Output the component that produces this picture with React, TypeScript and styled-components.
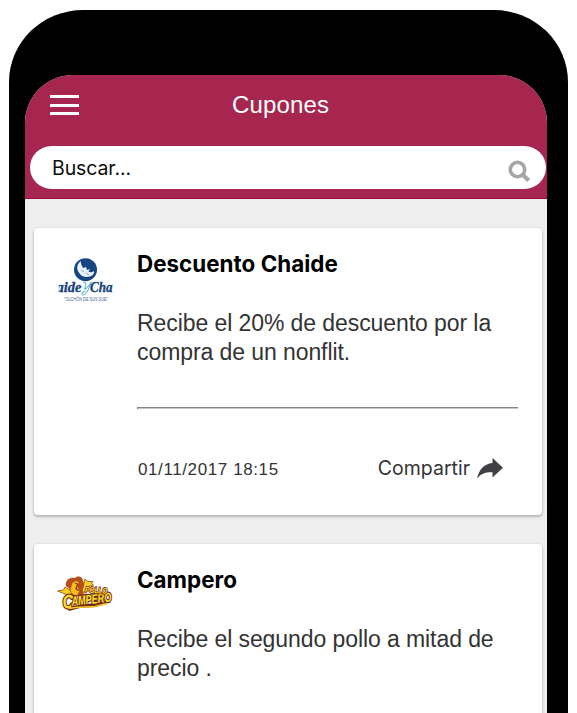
import React from 'react';
import styled, { createGlobalStyle } from 'styled-components';

const GlobalStyle = createGlobalStyle`
  * { box-sizing: border-box; }
  body { margin: 0; background: #fff; overflow: hidden; }
`;

const ui = `Inter, 'Liberation Sans', sans-serif`;
const body = `'Liberation Sans', Arial, sans-serif`;

const Stage = styled.div`
  width: 577px;
  height: 713px;
  padding: 10px 9px 0;
  overflow: hidden;
`;

const Phone = styled.div`
  width: 559px;
  height: 703px;
  padding: 65px 21px 0 16px;
  background: #000;
  border-radius: 74px 74px 0 0 / 72px 72px 0 0;
`;

const Screen = styled.main`
  height: 638px;
  background: #efefef;
  border-radius: 48px 48px 0 0;
  overflow: hidden;
`;

const Header = styled.header`
  height: 124px;
  background: #a6264f;
  border-bottom: 1px solid #9c0a3c;
`;

const TitleBar = styled.div`
  display: grid;
  grid-template-columns: 29px 1fr 40px;
  align-items: center;
  height: 71px;
  padding: 0 25px 11px;
`;

const MenuButton = styled.button`
  display: flex;
  flex-direction: column;
  gap: 5.5px;
  padding: 0;
  border: 0;
  background: none;
`;

const MenuBar = styled.span`
  width: 29px;
  height: 3px;
  background: #fff;
`;

const ScreenTitle = styled.h1`
  margin: 0;
  color: #fff;
  font: 400 24px/30px 'Liberation Sans', sans-serif;
  letter-spacing: 0.15px;
  text-align: center;
`;

const SearchBox = styled.label`
  display: flex;
  align-items: center;
  justify-content: space-between;
  height: 43px;
  margin: 0 1px 0 5px;
  padding: 0 15px 0 22px;
  background: #fff;
  border-radius: 22px;
`;

const SearchText = styled.span`
  color: #0c0c0c;
  font: 400 19.5px/24px ${ui};
  letter-spacing: -0.1px;
`;

const SearchIcon = styled.svg`
  width: 23px;
  height: 23px;
  margin-top: 7px;
`;

const CouponList = styled.section`
  display: flex;
  flex-direction: column;
  gap: 29px;
  padding: 29px 5px 0 9px;
`;

const Card = styled.article`
  display: grid;
  grid-template-columns: 60px 1fr;
  column-gap: 22px;
  height: 287px;
  padding: 23px 24px 0 21px;
  background: #fff;
  border-radius: 4px;
  box-shadow: 0 2px 3px rgba(0, 0, 0, 0.23), 0 0 3px rgba(0, 0, 0, 0.1);
`;

const Logo = styled.svg`
  display: block;
  width: 60px;
  height: 60px;
  overflow: visible;
`;

const CardTitle = styled.h2`
  margin: -1px 0 0;
  color: #000;
  font: 700 22.4px/28px ${ui};
  letter-spacing: 0.02px;
  white-space: nowrap;
`;

const Description = styled.p`
  margin: 31px 0 0;
  height: 57px;
  color: #333;
  font: 400 23px/28.7px ${body};
  letter-spacing: -0.08px;
  white-space: nowrap;
`;

const DescriptionLine = styled.span`
  display: block;
`;

const Rule = styled.hr`
  height: 2px;
  margin: 41px 0 0;
  border: 0;
  border-top: 1px solid #858585;
  border-left: 1px solid #858585;
  background: #c8c8c8;
`;

const CardFooter = styled.footer`
  display: flex;
  align-items: center;
  justify-content: space-between;
  height: 30px;
  margin-top: 44px;
  padding: 0 15px 0 1px;
`;

const Time = styled.time`
  color: #333;
  padding-top: 3px;
  font: 400 17px/20px ${body};
  letter-spacing: 0.6px;
`;

const Share = styled.button`
  display: flex;
  align-items: center;
  gap: 7px;
  padding: 0;
  border: 0;
  background: none;
  color: #333;
  font: 400 19.5px/24px ${ui};
`;

const ShareIcon = styled.svg`
  width: 26px;
  height: 21px;
  margin-top: 1px;
`;

function ChaideLogo() {
  return (
    <Logo viewBox="0 0 60 60" role="img" aria-label="Chaide y Chaide">
      <circle cx="30.500" cy="18.700" r="11.500" fill="#174482" />
      <path d="M25.500 10c-3 3-4.500 7-2 11 2.500 4.500 7.500 6.500 12.500 4 2.500-1.200 3.500-3 3-5-2 1.500-4 1.500-5.500.5l1.500-2.500-3 1-1-3-3 1-1.500-3z" fill="#e9f1fa" />
      <path d="M26 19l3 2M31 22l3 2" fill="none" stroke="#7396c6" strokeWidth=".8" />
      <text x="1.500" y="41" textLength="25" lengthAdjust="spacingAndGlyphs" fontFamily="Liberation Serif, serif" fontSize="14.500" fontStyle="italic" fontWeight="700" fill="#174078" stroke="#174078" strokeWidth=".3">aide</text>
      <path d="M0 27h3.800v16H0z" fill="#fff" />
      <path d="M28 32c4-2 3 3 1.500 6 3 0 5-5 7-7-2 5-4 12-8 13-3 0-1-3 2-4" fill="none" stroke="#62b5df" strokeWidth="1.100" />
      <text x="35" y="41" textLength="22.500" lengthAdjust="spacingAndGlyphs" fontFamily="Liberation Serif, serif" fontSize="14.500" fontStyle="italic" fontWeight="700" fill="#174078" stroke="#174078" strokeWidth=".3">Cha</text>
      <text x="9" y="49.500" textLength="44" lengthAdjust="spacingAndGlyphs" fontFamily="Liberation Sans, sans-serif" fontSize="4.500" fill="#426793">"OLCHÓN DE SUS SUE"</text>
    </Logo>
  );
}

function CamperoLogo() {
  return (
    <Logo viewBox="0 0 60 60" role="img" aria-label="Pollo Campero">
      <path d="M2.500 24l6-1 1.500-3 5 3 6 1-3 6-8-3z" fill="#f7cf22" stroke="#8a4a1c" strokeWidth=".8" />
      <path d="M28 20l2-8 3 2.500h5l-1.500 2 2 1.500-5 1.500-3 5-5 2z" fill="#f7cf22" stroke="#8a4a1c" strokeWidth=".8" />
      <path d="M11 16c1-5 6-6 9-5 3-3 8-1 8 3 3 4-1 7 0 11l2 5-13-1-3-8c-2-1-4-2-3-5z" fill="#b4501b" />
      <path d="M17.500 16l3-2 3 1-1 5 2 4-3 5-5-3-1-4z" fill="#f6bd1d" />
      <path d="M20 16l2.500 1-1.500 5 3 1.500" fill="none" stroke="#8a3018" strokeWidth="1.200" />
      <path d="M11 40l5-1 12-1 25-5-1 4-11 3-16 1-11 3z" fill="#712b15" />
      <g transform="rotate(-6 10 40)" fontFamily="Liberation Sans, sans-serif" fontStyle="italic" fontWeight="700" stroke="#712b15" strokeLinejoin="round" paintOrder="stroke">
        <text x="8" y="41.500" fontSize="19" textLength="11" lengthAdjust="spacingAndGlyphs" fill="#ffe027" strokeWidth="2.500">C</text>
        <text x="17" y="39.500" fontSize="13" textLength="40" lengthAdjust="spacingAndGlyphs" fill="#ffe027" strokeWidth="2.500">AMPERO</text>
      </g>
      <text x="30" y="25.500" transform="rotate(4 31 25)" textLength="22" lengthAdjust="spacingAndGlyphs" fontFamily="Liberation Sans, sans-serif" fontSize="8.500" fontStyle="italic" fontWeight="700" fill="#ffd62c" stroke="#7a3515" strokeWidth="1.800" paintOrder="stroke">POLLO</text>
      <path d="M14 41.500c9-2 18-1 26-2l12-3" fill="none" stroke="#f8ca24" strokeWidth="1.500" />
    </Logo>
  );
}

type Coupon = { title: string; lines: string[]; date?: string; logo: React.ReactNode };

const coupons: Coupon[] = [
  {
    title: 'Descuento Chaide',
    lines: ['Recibe el 20% de descuento por la', 'compra de un nonflit.'],
    date: '01/11/2017 18:15',
    logo: <ChaideLogo />,
  },
  {
    title: 'Campero',
    lines: ['Recibe el segundo pollo a mitad de', 'precio .'],
    logo: <CamperoLogo />,
  },
];

export default function App() {
  return (
    <Stage>
      <GlobalStyle />
      <Phone>
        <Screen>
          <Header>
            <TitleBar>
              <MenuButton aria-label="Menú"><MenuBar /><MenuBar /><MenuBar /></MenuButton>
              <ScreenTitle>Cupones</ScreenTitle>
            </TitleBar>
            <SearchBox>
              <SearchText>Buscar...</SearchText>
              <SearchIcon viewBox="0 0 23 23" fill="none" stroke="#a5a5a5">
                <circle cx="9.500" cy="9.500" r="7.200" strokeWidth="3.600" />
                <path d="M14.700 14.700l6 5.700" strokeWidth="4.200" />
              </SearchIcon>
            </SearchBox>
          </Header>
          <CouponList>
            {coupons.map((coupon) => (
              <Card key={coupon.title}>
                {coupon.logo}
                <div>
                  <CardTitle>{coupon.title}</CardTitle>
                  <Description>
                    {coupon.lines.map((line) => <DescriptionLine key={line}>{line}</DescriptionLine>)}
                  </Description>
                  {coupon.date && (
                    <>
                      <Rule />
                      <CardFooter>
                        <Time>{coupon.date}</Time>
                        <Share>
                          Compartir
                          <ShareIcon viewBox="0 0 26 21">
                            <path d="M15.500 0l10.500 9.800-10.500 9.700v-5.200C9 14 4 15.500 0 20.500 2 12 6.500 6 15.500 5z" fill="#404042" />
                          </ShareIcon>
                        </Share>
                      </CardFooter>
                    </>
                  )}
                </div>
              </Card>
            ))}
          </CouponList>
        </Screen>
      </Phone>
    </Stage>
  );
}
